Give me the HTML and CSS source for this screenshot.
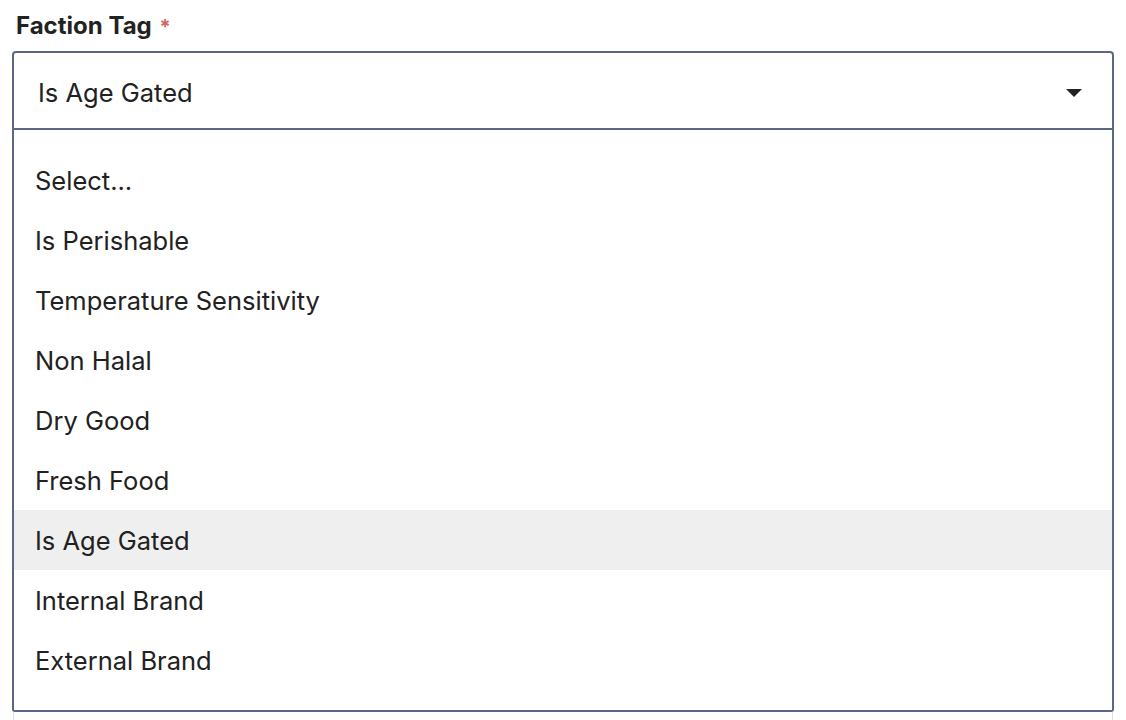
FILE: index.html
```html
<!DOCTYPE html>
<html>
<head>
<meta charset="utf-8">
<link rel="stylesheet" href="styles.css">
</head>
<body>
<div class="field">
  <div class="label">Faction Tag <span class="req">*</span></div>
  <div class="select">
    <div class="control">
      <span class="value">Is Age Gated</span>
      <svg class="caret" width="16" height="8" viewBox="0 0 16 8"><path d="M0 0 L16 0 L8 8 Z" fill="#222"/></svg>
    </div>
    <ul class="menu">
      <li>Select...</li>
      <li>Is Perishable</li>
      <li>Temperature Sensitivity</li>
      <li>Non Halal</li>
      <li>Dry Good</li>
      <li>Fresh Food</li>
      <li class="active">Is Age Gated</li>
      <li>Internal Brand</li>
      <li>External Brand</li>
    </ul>
  </div>
  <div class="next"></div>
</div>
</body>
</html>
```
FILE: styles.css
```css
html, body {
  margin: 0;
  padding: 0;
  background: #fff;
}
body {
  font-family: Inter, "Noto Sans", sans-serif;
  color: #212121;
  overflow: hidden;
}
.field {
  padding: 0 12px;
}
.label {
  font-size: 24px;
  font-weight: 700;
  color: #222;
  height: 51px;
  line-height: 51px;
  padding-left: 4px;
  box-sizing: border-box;
}
.req {
  color: #d46464;
  font-size: 20px;
  margin-left: 2px;
}
.select {
  width: 1102px;
}
.control {
  display: flex;
  align-items: center;
  justify-content: space-between;
  height: 79px;
  box-sizing: border-box;
  border: 2px solid #5a6787;
  border-radius: 4px 4px 0 0;
  padding: 4px 30px 0 24px;
  font-size: 25.5px;
}
.caret {
  display: block;
}
.menu {
  list-style: none;
  margin: 0;
  padding: 20px 0;
  border: 2px solid #5a6787;
  border-top: none;
  border-radius: 0 0 3px 3px;
}
.menu li {
  height: 60px;
  line-height: 62px;
  padding-left: 21px;
  font-size: 25.5px;
}
.menu li.active {
  background: #efefef;
}
.next {
  width: 1100px;
  height: 20px;
  margin-left: 1px;
  border-left: 1px solid #dedede;
  border-right: 1px solid #dedede;
  box-sizing: border-box;
}
```
